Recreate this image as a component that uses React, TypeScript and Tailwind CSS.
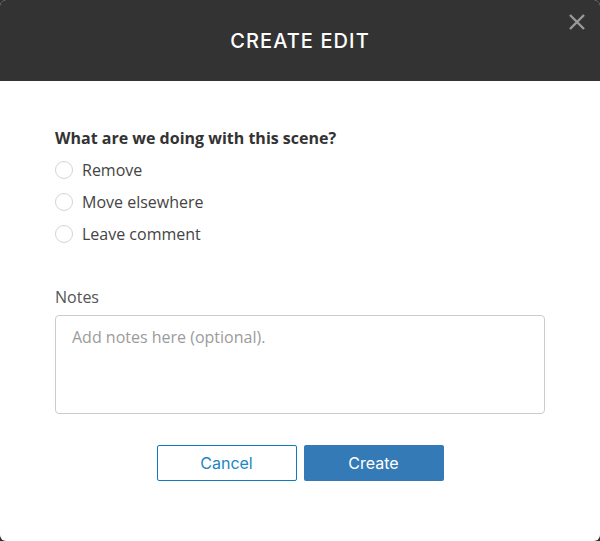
import React from "react";

const options = ["Remove", "Move elsewhere", "Leave comment"];

export default function App() {
  return (
    <div className="w-[600px] h-[541px] bg-[#2e2e2e]">
      <div className="w-full h-full bg-white rounded-[6px] overflow-hidden flex flex-col relative">
        {/* Header */}
        <div className="h-[81px] bg-[#333333] flex items-center justify-center shrink-0">
          <h1
            className="text-white text-[20px] font-medium tracking-[1.1px]"
            style={{ fontFamily: "Inter, 'Open Sans', sans-serif" }}
          >
            CREATE EDIT
          </h1>
        </div>
        <button className="absolute top-[13px] right-[14px] text-[#9a9a9a]" aria-label="Close">
          <svg width="18" height="18" viewBox="0 0 18 18" fill="none">
            <path d="M2 2 L16 16 M16 2 L2 16" stroke="currentColor" strokeWidth="2.4" />
          </svg>
        </button>

        {/* Body */}
        <div
          className="px-[55px] pt-[46px] flex flex-col"
          style={{ fontFamily: "'Open Sans', sans-serif" }}
        >
          <p className="text-[16px] font-bold text-[#333] leading-[22px]">
            What are we doing with this scene?
          </p>
          <div className="flex flex-col mt-[10px] gap-[10px]">
            {options.map((o) => (
              <label key={o} className="flex items-center gap-[9px] h-[22px] cursor-pointer">
                <span className="w-[18px] h-[18px] rounded-full border border-[#d4d4d4] bg-white shrink-0" />
                <span className="text-[16px] text-[#444] leading-[22px]">{o}</span>
              </label>
            ))}
          </div>

          <p className="mt-[41px] text-[16px] text-[#555] leading-[22px]">Notes</p>
          <textarea
            className="mt-[7px] w-full h-[99px] border border-[#cccccc] rounded-[4px] px-[16px] py-[10px] text-[16px] leading-[22px] text-[#444] placeholder:text-[#9b9b9b] resize-none outline-none"
            placeholder="Add notes here (optional)."
            style={{ fontFamily: "'Open Sans', sans-serif" }}
          />

          <div
            className="mt-[31px] flex justify-center gap-[7px]"
            style={{ fontFamily: "Inter, 'Open Sans', sans-serif" }}
          >
            <button className="w-[140px] h-[36px] border border-[#0b7dbe] rounded-[2px] text-[#1a86c4] text-[16px] bg-white">
              Cancel
            </button>
            <button className="w-[140px] h-[36px] rounded-[2px] bg-[#337ab7] text-white text-[16px]">
              Create
            </button>
          </div>
        </div>
      </div>
    </div>
  );
}
